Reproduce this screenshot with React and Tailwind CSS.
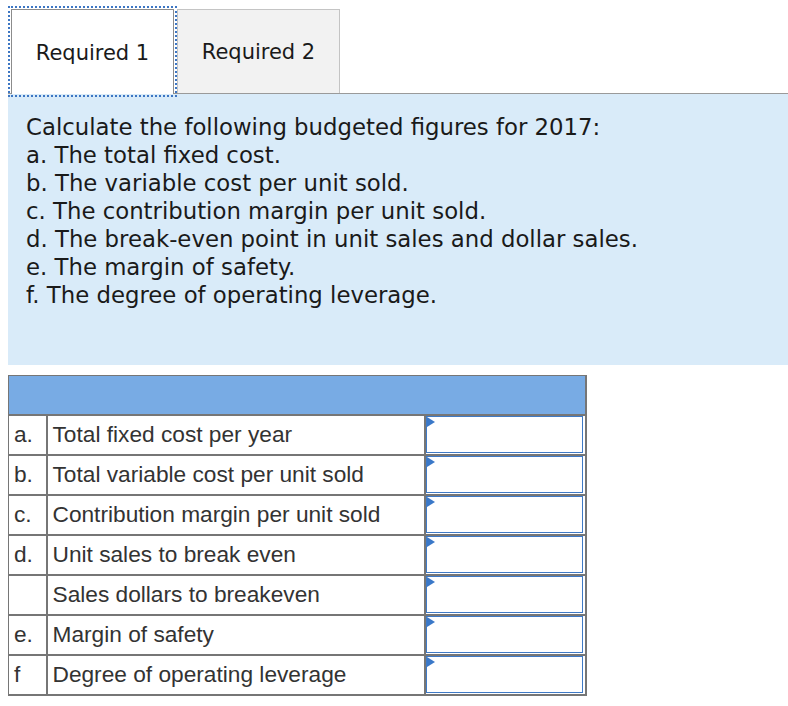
import React from 'react'

const rows = [
  ['a.', 'Total fixed cost per year'],
  ['b.', 'Total variable cost per unit sold'],
  ['c.', 'Contribution margin per unit sold'],
  ['d.', 'Unit sales to break even'],
  ['', 'Sales dollars to breakeven'],
  ['e.', 'Margin of safety'],
  ['f', 'Degree of operating leverage'],
]

const lines = [
  'Calculate the following budgeted figures for 2017:',
  'a. The total fixed cost.',
  'b. The variable cost per unit sold.',
  'c. The contribution margin per unit sold.',
  'd. The break-even point in unit sales and dollar sales.',
  'e. The margin of safety.',
  'f. The degree of operating leverage.',
]

export default function App() {
  return (
    <div className="bg-white min-h-[706px] pl-2 pt-[9px] text-[#1a1a1a]">
      {/* Tabs */}
      <div className="flex items-end -mb-px relative z-10" style={{ fontFamily: '"DejaVu Sans", Verdana, sans-serif' }}>
        <div className="ml-[3px] w-[163px] h-[85px] pt-[3px] bg-white border border-b-0 border-[#8c8c8c] outline-2 outline-dotted outline-[#3d76c3] outline-offset-[1px] flex items-center justify-center text-[21px]">
          Required 1
        </div>
        <div className="ml-[3px] w-[163px] h-[84px] pt-[3px] mb-px bg-[#f2f2f2] border border-b-0 border-[#c4c4c4] flex items-center justify-center text-[21px]">
          Required 2
        </div>
      </div>

      {/* Question panel */}
      <div
        className="bg-[#d9ebf9] border-t border-[#9a9a9a] h-[272px] pl-[18px] pt-[19px] text-[22.8px] leading-[28px]"
        style={{ fontFamily: '"DejaVu Sans", Verdana, sans-serif' }}
      >
        {lines.map(l => <div key={l}>{l}</div>)}
      </div>

      {/* Answer table */}
      <table
        className="mt-[10px] border-collapse text-[22.7px] text-[#333]"
        style={{ fontFamily: '"Liberation Sans", Arial, sans-serif' }}
      >
        <thead>
          <tr>
            <th colSpan={3} className="h-[39px] bg-[#78abe4] border border-[#767676] border-r-2 border-b-2 p-0" />
          </tr>
        </thead>
        <tbody>
          {rows.map(([k, label], i) => (
            <tr key={i} className="h-[40px]">
              <td className="w-[38px] border-2 border-l border-[#767676] pl-[5px] p-0 align-middle">{k}</td>
              <td className="w-[378px] border-2 border-[#767676] pl-[5px] p-0 align-middle">{label}</td>
              <td className="w-[161px] border-2 border-[#767676] p-0">
                <div className="relative h-[37px] w-[157px] border border-[#3f7ac6] bg-white">
                  <span className="absolute left-0 top-0 w-0 h-0 border-y-[5px] border-y-transparent border-l-[8px] border-l-[#3a78c8]" />
                </div>
              </td>
            </tr>
          ))}
        </tbody>
      </table>
    </div>
  )
}
